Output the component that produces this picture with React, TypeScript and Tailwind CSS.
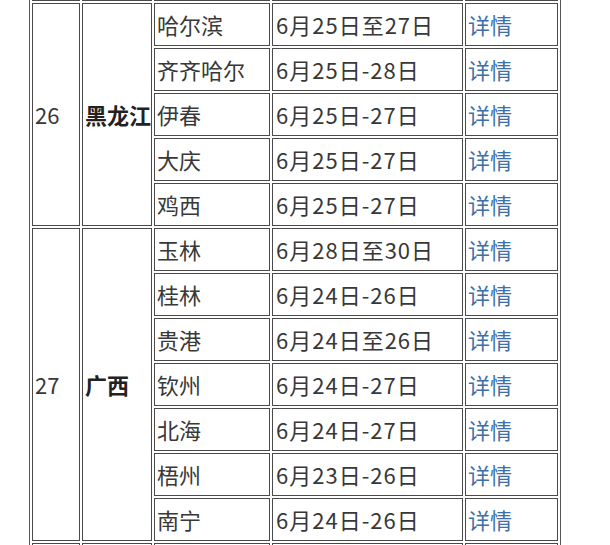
import React from "react";

type Group = { no: string; prov: string; rows: [string, string][]; hidden?: boolean };

const groups: Group[] = [
  { no: "", prov: "", rows: [["", ""]], hidden: true },
  {
    no: "26",
    prov: "黑龙江",
    rows: [
      ["哈尔滨", "6月25日至27日"],
      ["齐齐哈尔", "6月25日-28日"],
      ["伊春", "6月25日-27日"],
      ["大庆", "6月25日-27日"],
      ["鸡西", "6月25日-27日"],
    ],
  },
  {
    no: "27",
    prov: "广西",
    rows: [
      ["玉林", "6月28日至30日"],
      ["桂林", "6月24日-26日"],
      ["贵港", "6月24日至26日"],
      ["钦州", "6月24日-27日"],
      ["北海", "6月24日-27日"],
      ["梧州", "6月23日-26日"],
      ["南宁", "6月24日-26日"],
    ],
  },
  { no: "", prov: "", rows: [["", ""], ["", ""]], hidden: true },
];

const cell = "border border-[#4a4a4a] h-[43px] p-0 pl-[2px] align-middle whitespace-nowrap overflow-hidden";

export default function App() {
  return (
    <div className="h-[545px] w-[610px] overflow-hidden bg-white font-['Noto_Sans_CJK_SC',sans-serif] text-[22px] leading-[1.3] text-[#383838]">
      <table className="ml-[29px] mt-[-45px] border-separate border-spacing-[2px] border border-[#555] table-fixed">
        <colgroup>
          <col className="w-[48px]" />
          <col className="w-[70px]" />
          <col className="w-[116px]" />
          <col className="w-[191px]" />
          <col className="w-[93px]" />
        </colgroup>
        <tbody>
          {groups.map((g, gi) =>
            g.rows.map((r, i) => (
              <tr key={gi + "-" + i}>
                {i === 0 && (
                  <>
                    <td rowSpan={g.rows.length} className={cell}>
                      {g.no}
                    </td>
                    <td rowSpan={g.rows.length} className={cell + " pl-[1px] font-bold text-[#222]"}>
                      {g.prov}
                    </td>
                  </>
                )}
                <td className={cell + " pl-[1px]"}>{r[0]}</td>
                <td className={cell + " pl-[3px] tracking-[1px]"}>{r[1]}</td>
                <td className={cell + " pl-[1px]"}>
                  {!g.hidden && <a className="text-[#3d6fa8]">详情</a>}
                </td>
              </tr>
            ))
          )}
        </tbody>
      </table>
    </div>
  );
}
